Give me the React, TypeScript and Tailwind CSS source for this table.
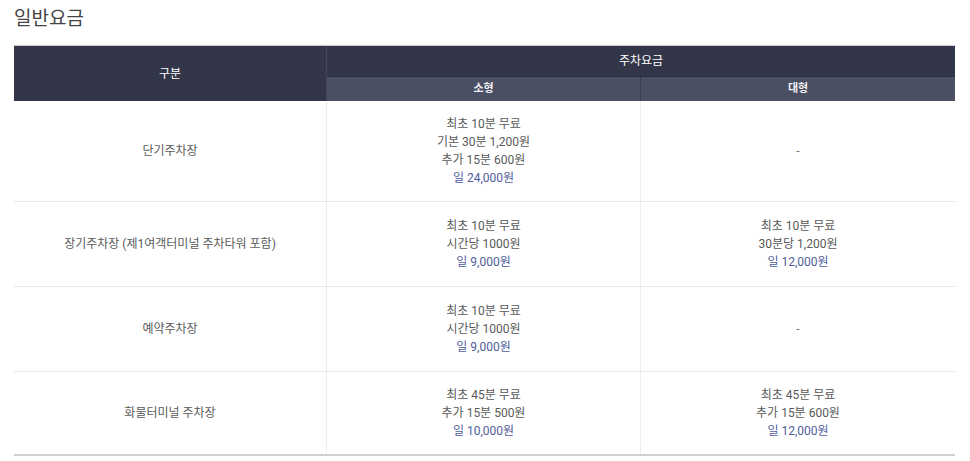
import React from "react";

const font = { fontFamily: '"Roboto", "Noto Sans CJK KR", sans-serif' };

type Line = { t: string; blue?: boolean };
const rows: { name: string; small: Line[] | null; large: Line[] | null; h: string }[] = [
  {
    name: "단기주차장",
    small: [
      { t: "최초 10분 무료" },
      { t: "기본 30분 1,200원" },
      { t: "추가 15분 600원" },
      { t: "일 24,000원", blue: true },
    ],
    large: null,
    h: "h-[101px]",
  },
  {
    name: "장기주차장 (제1여객터미널 주차타워 포함)",
    small: [{ t: "최초 10분 무료" }, { t: "시간당 1000원" }, { t: "일 9,000원", blue: true }],
    large: [{ t: "최초 10분 무료" }, { t: "30분당 1,200원" }, { t: "일 12,000원", blue: true }],
    h: "h-[85px]",
  },
  {
    name: "예약주차장",
    small: [{ t: "최초 10분 무료" }, { t: "시간당 1000원" }, { t: "일 9,000원", blue: true }],
    large: null,
    h: "h-[85px]",
  },
  {
    name: "화물터미널 주차장",
    small: [{ t: "최초 45분 무료" }, { t: "추가 15분 500원" }, { t: "일 10,000원", blue: true }],
    large: [{ t: "최초 45분 무료" }, { t: "추가 15분 600원" }, { t: "일 12,000원", blue: true }],
    h: "h-[84px]",
  },
];

function Cell({ lines }: { lines: Line[] | null }) {
  if (!lines) return <span className="text-[#777]">-</span>;
  return (
    <div className="flex flex-col items-center leading-[18px]">
      {lines.map((l, i) => (
        <span key={i} className={l.blue ? "text-[#4f5d9c]" : "text-[#5a5a5a]"}>
          {l.t}
        </span>
      ))}
    </div>
  );
}

export default function App() {
  return (
    <div className="bg-white w-[970px] h-[461px] overflow-hidden" style={font}>
      <h2 className="pl-[14px] pt-[5px] h-[45px] text-[19px] leading-[28px] text-[#444] font-normal">
        일반요금
      </h2>
      <div className="ml-[14px] w-[941px] text-[12px]">
        <div className="grid grid-cols-[313px_628px] border-t border-[#c9cad0]">
          <div className="bg-[#333548] text-white flex items-center justify-center h-[55px] border-r border-[#454859]">
            구분
          </div>
          <div className="flex flex-col">
            <div className="bg-[#333548] text-white flex items-center justify-center h-[31px] border-b border-[#2a2c3b]">
              주차요금
            </div>
            <div className="grid grid-cols-[314px_314px] h-[24px] bg-[#4b4f63] text-[#f0f0f4] text-[11px] font-bold">
              <div className="flex items-center justify-center border-r border-[#3a3d4e]">소형</div>
              <div className="flex items-center justify-center">대형</div>
            </div>
          </div>
        </div>
        {rows.map((r, i) => (
          <div
            key={i}
            className={`grid grid-cols-[313px_314px_314px] ${r.h} ${
              i === rows.length - 1 ? "border-b-2 border-[#d0d0d0]" : "border-b border-[#e6e6e6]"
            }`}
          >
            <div className="flex items-center justify-center text-[#5a5a5a] border-r border-[#eeeeee]">
              {r.name}
            </div>
            <div className="flex items-center justify-center border-r border-[#eeeeee]">
              <Cell lines={r.small} />
            </div>
            <div className="flex items-center justify-center">
              <Cell lines={r.large} />
            </div>
          </div>
        ))}
      </div>
    </div>
  );
}
